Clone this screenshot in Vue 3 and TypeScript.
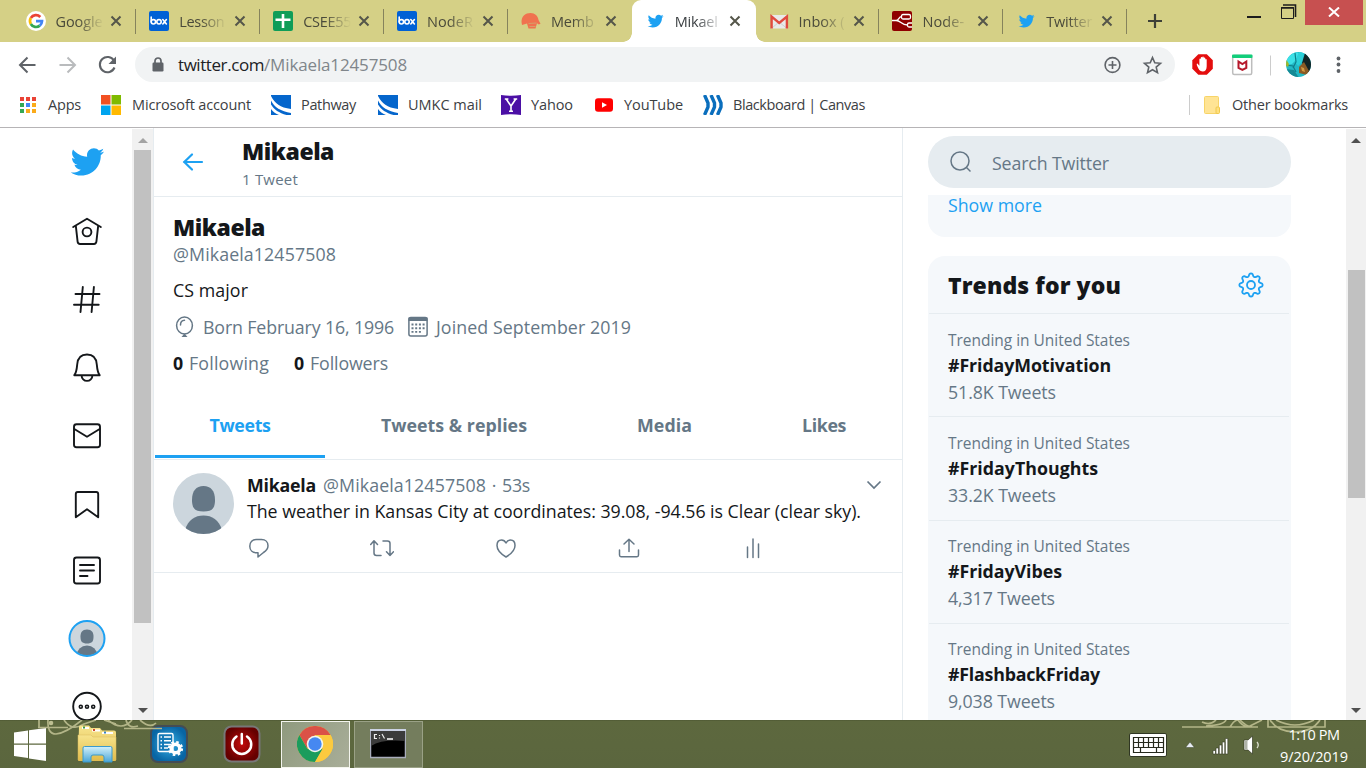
<script setup lang="ts">
interface BrowserTab { icon: string; title: string; w: number; active?: boolean; line?: boolean }
interface Bookmark { icon: string; label: string; w: number; iw: number; gap: number; after: number }
interface Trend { tag: string; tagW: number; count: string; countW: number; h: number; pad: number }

// Tightens or loosens the tracking so that a label fills the given width.
const vFit = {
  mounted(el: HTMLElement, binding: { value: number }) {
    const natural = el.getBoundingClientRect().width
    const count = (el.textContent ?? '').trim().length
    if (count > 0) el.style.letterSpacing = `${(binding.value - natural) / count}px`
  },
}

const tabs: BrowserTab[] = [
  { icon: 'google', title: 'Google', w: 47, line: true },
  { icon: 'box', title: 'Lesson', w: 45, line: true },
  { icon: 'sheets', title: 'CSEE55', w: 48, line: true },
  { icon: 'box', title: 'NodeR', w: 46, line: true },
  { icon: 'helmet', title: 'Memb', w: 43 },
  { icon: 'bird', title: 'Mikael', w: 43, active: true },
  { icon: 'gmail', title: 'Inbox (', w: 46, line: true },
  { icon: 'nodered', title: 'Node-', w: 42, line: true },
  { icon: 'bird', title: 'Twitter', w: 46, line: true },
]

const bookmarks: Bookmark[] = [
  { icon: 'apps', label: 'Apps', w: 33, iw: 18, gap: 11, after: 20 },
  { icon: 'microsoft', label: 'Microsoft account', w: 119, iw: 20, gap: 11, after: 20 },
  { icon: 'swoosh', label: 'Pathway', w: 55, iw: 20, gap: 10, after: 22 },
  { icon: 'swoosh', label: 'UMKC mail', w: 74, iw: 20, gap: 10, after: 19 },
  { icon: 'yahoo', label: 'Yahoo', w: 42, iw: 20, gap: 10, after: 21 },
  { icon: 'youtube', label: 'YouTube', w: 59, iw: 20, gap: 10, after: 20 },
  { icon: 'bb', label: 'Blackboard | Canvas', w: 132, iw: 20, gap: 10, after: 0 },
]

const trends: Trend[] = [
  { tag: '#FridayMotivation', tagW: 163, count: '51.8K Tweets', countW: 108, h: 103, pad: 13 },
  { tag: '#FridayThoughts', tagW: 150, count: '33.2K Tweets', countW: 108, h: 104, pad: 13 },
  { tag: '#FridayVibes', tagW: 114, count: '4,317 Tweets', countW: 107, h: 103, pad: 12 },
  { tag: '#FlashbackFriday', tagW: 152, count: '9,038 Tweets', countW: 107, h: 103, pad: 12 },
]

const bird = 'M23.643 4.937c-.835.37-1.732.62-2.675.733.962-.576 1.7-1.49 2.048-2.578-.9.534-1.897.922-2.958 1.13-.85-.904-2.06-1.47-3.4-1.47-2.572 0-4.658 2.086-4.658 4.66 0 .364.042.718.12 1.06-3.873-.195-7.304-2.05-9.602-4.868-.4.69-.63 1.49-.63 2.342 0 1.616.823 3.043 2.072 3.878-.764-.025-1.482-.234-2.11-.583v.06c0 2.257 1.605 4.14 3.737 4.568-.392.106-.803.162-1.227.162-.3 0-.593-.028-.877-.082.593 1.85 2.313 3.198 4.352 3.234-1.595 1.25-3.604 1.995-5.786 1.995-.376 0-.747-.022-1.112-.065 2.062 1.323 4.51 2.093 7.14 2.093 8.57 0 13.255-7.098 13.255-13.254 0-.2-.005-.402-.014-.602.91-.658 1.7-1.477 2.323-2.41z'

// Outline of the eight-toothed settings gear.
const gear = (() => {
  const pts: string[] = []
  for (let i = 0; i <= 96; i++) {
    const a = (i / 96) * Math.PI * 2
    const c = Math.cos(a * 8)
    const r = 10.1 + 1.5 * Math.sign(c) * Math.pow(Math.abs(c), 0.6)
    pts.push(`${(r * Math.sin(a)).toFixed(2)} ${(-r * Math.cos(a)).toFixed(2)}`)
  }
  return `M${pts.join('L')}Z`
})()
</script>

<template>
  <div class="screen">
    <header class="tabstrip">
      <div v-for="(t, i) in tabs" :key="i" class="tab" :class="{ active: t.active, line: t.line }">
        <svg class="fav" viewBox="0 0 20 20">
          <g v-if="t.icon === 'google'">
            <circle cx="10" cy="10" r="10" fill="#fff" />
            <g fill="none" stroke-width="2.7">
              <path d="M14.3 6A6 6 0 0 0 4.8 7" stroke="#ea4335" />
              <path d="M4.8 7a6 6 0 0 0 0 6" stroke="#fbbc05" />
              <path d="M4.8 13a6 6 0 0 0 9 1.6" stroke="#34a853" />
              <path d="M13.8 14.6A6 6 0 0 0 16 10.2H10" stroke="#4285f4" />
            </g>
          </g>
          <g v-else-if="t.icon === 'box'">
            <rect width="20" height="20" rx="2" fill="#0061d5" />
            <g fill="none" stroke="#fff" stroke-width="1.6" stroke-linecap="round">
              <path d="M2.2 6v5M13.8 8.6l3.6 4.4M17.4 8.6L13.8 13" />
              <circle cx="4.4" cy="10.8" r="2.2" /><circle cx="10" cy="10.8" r="2.2" />
            </g>
          </g>
          <g v-else-if="t.icon === 'sheets'">
            <rect width="20" height="20" rx="2" fill="#0f9d58" />
            <path d="M10 3v14M2.5 8.7h15" stroke="#fff" stroke-width="2.6" />
          </g>
          <g v-else-if="t.icon === 'helmet'">
            <path d="M.5 11C.5 5 4.500 2 9.500 2 14 2 17 5 17.500 9l2 3.700-1.800.8-1.700-1.300-1.500 5.300H7.500L6 12.500 1 14z" fill="#f0724f" />
            <path d="M7.500 12.500l8-.5M8.500 15.500h6" stroke="#d6a06a" stroke-width="1" />
          </g>
          <g v-else-if="t.icon === 'bird'" transform="translate(2 1.700) scale(.7)"><path :d="bird" fill="#1da1f2" /></g>
          <g v-else-if="t.icon === 'gmail'" transform="translate(1 0)">
            <rect x="1" y="4" width="16.500" height="13.500" fill="#e9e9e9" />
            <path d="M2 17l7-6 7.500 6" fill="none" stroke="#cfcfcf" />
            <path d="M1.600 17.500V5.500L9.200 12l7.700-6.500v12" fill="none" stroke="#e04a3f" stroke-width="2.400" />
          </g>
          <g v-else>
            <rect width="20" height="20" rx="2" fill="#8f0000" />
            <g fill="none" stroke="#fff" stroke-width="1.300">
              <rect x="9.500" y="3.500" width="9" height="4.500" rx="1.500" /><path d="M20 12h-3q-1.500 0-1.500 1.500v1q0 1.500 1.500 1.500h3" />
              <path d="M0 9.500h4c3 0 2.500-3.800 5.500-3.800M4 9.500c5 0 5 4.500 11.500 4.500" />
            </g>
          </g>
        </svg>
        <span class="tabtext"><span v-fit="t.w" class="t">{{ t.title }}</span></span>
        <svg class="x" viewBox="0 0 12 12"><path d="M1.500 1.500l9 9M10.500 1.500l-9 9" /></svg>
      </div>
      <svg class="plus" viewBox="0 0 16 16"><path d="M8 1v14M1 8h14" /></svg>
      <div class="winbtns">
        <svg class="mini" viewBox="0 0 60 25">
          <path d="M2 17h14" stroke="#1c1c1c" stroke-width="2" />
          <path d="M36.500 7.500h12v11h-12z" fill="none" stroke="#1c1c1c" />
          <path d="M36 8h13M38 5h12.500v12" fill="none" stroke="#1c1c1c" stroke-width="1.600" />
        </svg>
        <div class="closebtn"><svg viewBox="0 0 12 10"><path d="M1 .5l10 9M11 .5l-10 9" stroke="#fff" stroke-width="2" /></svg></div>
      </div>
    </header>

    <div class="toolbar">
      <svg class="navbtns" viewBox="0 0 120 36">
        <path d="M35.500 18H20.500M27.500 10.500L20 18l7.500 7.500" fill="none" stroke="#5f6368" stroke-width="2" />
        <path d="M59.500 18h15M67.500 10.500L75 18l-7.500 7.500" fill="none" stroke="#b9bbbd" stroke-width="2" />
        <path d="M114 13.700A7.600 7.600 0 1 0 114.500 20.500" fill="none" stroke="#5f6368" stroke-width="2.100" />
        <path d="M116 9.500v7.500h-7.500z" fill="#5f6368" />
      </svg>
      <div class="omnibox">
        <svg class="lock" viewBox="0 0 12 15"><rect x=".5" y="5.500" width="11" height="9" rx="1.200" fill="#5f6368" /><path d="M3 6V4a3 3 0 0 1 6 0v2" fill="none" stroke="#5f6368" stroke-width="1.700" /></svg>
        <span v-fit="86" class="t url">twitter.com</span><span v-fit="143" class="t url path">/Mikaela12457508</span>
        <svg class="omni-icons" viewBox="0 0 62 20">
          <circle cx="9.500" cy="10" r="7.400" fill="none" stroke="#5f6368" stroke-width="1.600" />
          <path d="M9.500 6v8M5.500 10h8" stroke="#5f6368" stroke-width="1.600" />
          <path d="M49.500 2.600l2.300 5.200 5.700.5-4.300 3.800 1.300 5.600-5-3-5 3 1.300-5.600-4.300-3.800 5.700-.5z" fill="none" stroke="#5f6368" stroke-width="1.600" />
        </svg>
      </div>
      <svg class="ext" viewBox="0 0 170 30">
        <path d="M9.300 5h8.500l6 6v8.500l-6 6H9.300l-6-6V11z" transform="translate(0 -.7)" fill="#e40d0d" />
        <path d="M8.600 14.500l1.800 2V10c0-1 1.400-1 1.400 0V8.500c0-1 1.500-1 1.500 0V8c0-1 1.500-1 1.500 0v1c0-1 1.500-1 1.500 0v1.500c0-1 1.400-1 1.400 0V17c0 3.500-1.500 5.200-4 5.200-3 0-4-2-5.800-6.200-.4-1.500.2-2 .7-1.500z" transform="translate(0 -.7)" fill="#fff" />
        <rect x="43.700" y="5.500" width="19" height="19" rx="1.500" fill="#fff" stroke="#bdbdbd" stroke-width="1.500" />
        <rect x="43" y="4.500" width="20.500" height="3.500" rx="1" fill="#12ce7a" />
        <path d="M49.500 11.500v6.500l3.900 2 3.900-2v-6.500l-3.900 2.500z" fill="none" stroke="#b6172a" stroke-width="2" />
        <path d="M81.500 5.500v20" stroke="#ccc" />
        <clipPath id="pf"><circle cx="109.500" cy="14.500" r="12.500" /></clipPath>
        <g clip-path="url(#pf)">
          <rect x="96" y="1" width="27" height="28" fill="#22b9c6" />
          <path d="M98 7l8-5 4 1-3 7-4 4-6 1z" fill="#3ce0e6" />
          <path d="M110 2h5l-1 9-5 5-3-4z" fill="#2bd0d8" />
          <path d="M106 3l1 9-3 6M97 15l7 1 3 6" fill="none" stroke="#0e7f8b" stroke-width="1.200" />
          <path d="M116 3l7 7v18l-6-8-4-7z" fill="#122526" /><path d="M96 19l9 1 5 8H97z" fill="#158a95" />
          <path d="M110 17l5-5 5 9-2 4-8-2z" fill="#8a5b25" /><path d="M112 17l3 1 1 4-3-1z" fill="#d09a44" /><path d="M97 9l3 5-1 3-3-2z" fill="#9bb62f" />
        </g>
        <g fill="#5f6368"><circle cx="149.500" cy="8.500" r="1.900" /><circle cx="149.500" cy="14.500" r="1.900" /><circle cx="149.500" cy="21" r="1.900" /></g>
      </svg>
    </div>

    <div class="bookmarks">
      <div v-for="(b, i) in bookmarks" :key="i" class="bm" :style="{ gap: b.gap + 'px', marginRight: b.after + 'px' }">
        <svg :width="b.iw" height="20" :viewBox="`0 0 ${b.iw} 20`">
          <g v-if="b.icon === 'apps'">
            <path d="M1 2h4v4H1zM7 2h4v4H7zM13 2h4v4h-4z" fill="#ea4335" />
            <path d="M1 8h4v4H1zM1 14h4v4H1z" fill="#34a853" /><path d="M7 8h4v4H7z" fill="#4285f4" />
            <path d="M13 8h4v4h-4zM13 14h4v4h-4zM7 14h4v4H7z" fill="#fbab1a" />
          </g>
          <g v-else-if="b.icon === 'microsoft'">
            <path d="M0 0h9.500v9.500H0z" fill="#f25022" /><path d="M10.500 0H20v9.500h-9.500z" fill="#7fba00" />
            <path d="M0 10.500h9.500V20H0z" fill="#00a4ef" /><path d="M10.500 10.500H20V20h-9.500z" fill="#ffb900" />
          </g>
          <g v-else-if="b.icon === 'swoosh'">
            <rect width="20" height="20" fill="#0566cc" />
            <path d="M0 1c4 7.500 9 11.500 20 13v4C10 16.500 3 12 0 5.500z" fill="#fff" />
            <path d="M0 9.500c3 5 8 8.500 15.500 10.500H8C5 19 2 17 0 14z" fill="#fff" />
          </g>
          <g v-else-if="b.icon === 'yahoo'">
            <path d="M0 0q10 1.400 20 0v20q-10-1.400-20 0z" fill="#4b0fa5" />
            <path d="M5.200 4l4.800 7 4.800-7M10 11v5.500M3.800 4h3.600M12.600 4h3.600M8 16.300h4" fill="none" stroke="#fff" stroke-width="1.600" />
          </g>
          <g v-else-if="b.icon === 'youtube'"><rect x="1" y="3.200" width="18" height="13.500" rx="3" fill="#f00" /><path d="M8 7.200v5.600l5-2.800z" fill="#fff" /></g>
          <g v-else fill="none" stroke="#0a6ebd" stroke-width="3.400" stroke-linejoin="round"><path d="M1.500 0L5 8v4L1.500 20M8 0l3.500 8v4L8 20M14.500 0L18 8v4l-3.500 8" /></g>
        </svg>
        <span v-fit="b.w" class="t">{{ b.label }}</span>
      </div>
      <div class="other">
        <svg width="16" height="20" viewBox="0 0 16 20"><rect x=".5" y="1.500" width="14" height="17" rx="1" fill="#ffe494" stroke="#f7d468" /><rect x="12" y="12" width="3.500" height="6.500" rx="1" fill="#ffe07e" stroke="#f0c84d" /></svg>
        <span v-fit="116" class="t">Other bookmarks</span>
      </div>
    </div>

    <div class="page">
      <nav class="side">
        <svg viewBox="-18 -18 36 36"><g transform="translate(-17.700 -17.700) scale(1.475)"><path :d="bird" fill="#1da1f2" /></g></svg>
        <svg viewBox="-18 -18 36 36"><g class="ln"><path d="M-13.800-3L0-11.200 13.800-3M-11.200-4.300l1.800 16q.3 2.300 2.400 2.300h14q2.100 0 2.400-2.300l1.800-16" /><circle cy="2" r="4.400" /></g></svg>
        <svg viewBox="-18 -18 36 36"><path class="ln" d="M-4.200-11L-6.500 14M6.900-11L4.600 14M-11.500-4H12.500M-13 6.800H11.700" /></svg>
        <svg viewBox="-18 -18 36 36"><path class="ln" d="M-12.700 9.200C-10.500 6.500-10.200 3-9.800-1.500-9.300-8-5.500-11.500 0-11.500S9.300-8 9.800-1.500C10.200 3 10.500 6.500 12.700 9.200ZM-5.400 9.500A5.400 5.400 0 0 0 5.400 9.500" /></svg>
        <svg viewBox="-18 -18 36 36"><g class="ln"><rect x="-13" y="-9.700" width="26" height="23" rx="2.500" /><path d="M-12.700-5L0 2.800 12.700-5" /></g></svg>
        <svg viewBox="-18 -18 36 36"><path class="ln" d="M-11.200 15.200V-8q0-2 2-2H9.200q2 0 2 2V15.200L0 7.300Z" /></svg>
        <svg viewBox="-18 -18 36 36"><g class="ln"><rect x="-13" y="-12.500" width="26" height="26" rx="2.500" /><path d="M-7-5H7M-7 .5H7M-7 6H.5" /></g></svg>
        <svg class="me" viewBox="-19 -19.500 38 38">
          <clipPath id="c1"><circle r="17" /></clipPath>
          <circle r="17.500" fill="#ccd6dd" />
          <g fill="#657786" clip-path="url(#c1)"><path d="M0-9C4.800-9 6.500-6 6.500-2 6.500 3 5 5 0 5S-6.500 3-6.500-2C-6.500-6-4.800-9 0-9Z" /><circle cy="17.500" r="10.500" /></g>
          <circle r="17.500" fill="none" stroke="#1da1f2" stroke-width="2" />
        </svg>
        <svg viewBox="-18 -18 36 36"><g class="ln"><circle cy=".5" r="13.800" /><g stroke-width="1.600"><circle cx="-6.200" cy=".7" r="1.500" /><circle cy=".7" r="1.500" /><circle cx="6.200" cy=".7" r="1.500" /></g></g></svg>
      </nav>

      <div class="scroll inner"><i class="up dim"></i><b></b><i class="down"></i></div>

      <main class="col">
        <div class="head">
          <svg class="backarrow" viewBox="0 0 22 20"><path d="M20 10H2M10 2.500L2.300 10l7.700 7.500" /></svg>
          <div class="headtext">
            <h2><span v-fit="92" class="t">Mikaela</span></h2>
            <p><span v-fit="56" class="t">1 Tweet</span></p>
          </div>
        </div>
        <section class="profile">
          <h1><span v-fit="92" class="t">Mikaela</span></h1>
          <p class="grey handle"><span v-fit="163" class="t">@Mikaela12457508</span></p>
          <p class="bio"><span v-fit="75" class="t">CS major</span></p>
          <div class="facts grey">
            <svg width="24" height="24" viewBox="0 0 24 24"><g fill="none" stroke="#657786" stroke-width="1.500"><ellipse cx="11.500" cy="10.500" rx="7.900" ry="8.600" /><path d="M7.500 10c0-2.500 1.500-4.500 4-4.700" stroke-linecap="round" /></g><path d="M11.500 18.500l3 3.500h-6z" fill="#657786" /></svg>
            <span v-fit="191" class="t">Born February 16, 1996</span>
            <svg class="cal" width="20" height="22" viewBox="0 0 20 22"><rect x=".9" y="1.500" width="18.200" height="18.500" rx="2" fill="none" stroke="#657786" stroke-width="1.500" /><path d="M.5 1.500h19V5H.5z" fill="#657786" /><path d="M3.500 8.500h2M7.200 8.500h2M10.900 8.500h2M14.600 8.500h2M3.500 12.200h2M7.200 12.200h2M10.900 12.200h2M14.600 12.200h2M3.500 15.900h2M7.200 15.900h2M10.900 15.900h2" stroke="#657786" stroke-width="1.900" /></svg>
            <span v-fit="195" class="t">Joined September 2019</span>
          </div>
          <div class="follow grey">
            <strong v-fit="10" class="t">0</strong><span v-fit="80" class="t fl">Following</span>
            <strong v-fit="10" class="t two">0</strong><span v-fit="78" class="t fl">Followers</span>
          </div>
        </section>
        <div class="tabs">
          <div class="ptab one"><span v-fit="61" class="t">Tweets</span></div>
          <div class="ptab two"><span v-fit="146" class="t">Tweets &amp; replies</span></div>
          <div class="ptab three"><span v-fit="55" class="t">Media</span></div>
          <div class="ptab four"><span v-fit="44" class="t">Likes</span></div>
        </div>
        <article class="tweet">
          <svg class="ava" viewBox="0 0 61 61">
            <clipPath id="c2"><circle cx="30.500" cy="30.500" r="30.500" /></clipPath>
            <g clip-path="url(#c2)"><rect width="61" height="61" fill="#ccd6dd" />
              <g fill="#657786"><path d="M30.500 13C38 13 42 18 42 27S38.500 38.500 30.500 38.500 19 36 19 27 23 13 30.500 13Z" /><path d="M12 57C15 47 22 42.500 30.500 42.500S46 47 49 57V61H12Z" /></g></g>
          </svg>
          <div class="tbody">
            <div class="byline"><strong v-fit="69" class="t">Mikaela</strong><span v-fit="163" class="t grey hd">@Mikaela12457508</span><span class="t grey dot">·</span><span v-fit="28" class="t grey">53s</span>
              <svg class="chev" viewBox="0 0 16 10"><path d="M1.500 1.500L8 8l6.500-6.500" fill="none" stroke="#657786" stroke-width="1.700" /></svg>
            </div>
            <p class="msg"><span v-fit="614" class="t">The weather in Kansas City at coordinates: 39.08, -94.56 is Clear (clear sky).</span></p>
            <div class="actions">
              <svg viewBox="-12 -12 24 24"><path d="M-2.500-8.500H2.500C6.500-8.500 9-5.800 9-2.300 9 .8 7.300 2.700 4.500 4.500L-1 9V4.800H-2.500C-6.500 4.800-9.200 2-9.200-1.700-9.200-5.800-6.500-8.500-2.500-8.500Z" /></svg>
              <svg viewBox="-12 -12 24 24"><path d="M-1 7.500H-5.500Q-8 7.500-8 5V-7M-11.300-3.500L-8-7.200-4.500-3.500M1-7H5.500Q8 -7 8-4.500V7.500M4.500 3.800L8 7.500 11.500 3.800" /></svg>
              <svg viewBox="-12 -12 24 24"><path d="M0 9C-5 6-9 1.500-9-2.500-9-6-7-8-4.500-8-2.500-8-1-7 0-5 1-7 2.500-8 4.500-8 7-8 9-6 9-2.500 9 1.500 5 6 0 9Z" /></svg>
              <svg viewBox="-12 -12 24 24"><path d="M-9.500 2V7Q-9.500 8.700-8 8.700H8Q9.500 8.700 9.500 7V2M0 3.500V-8.500M-5-4L0-8.800 5-4" /></svg>
              <svg viewBox="-12 -12 24 24"><path d="M-5.500 9.500V-1M0 9.500V-9M5.500 9.500V-4" /></svg>
            </div>
          </div>
        </article>
      </main>

      <aside class="right">
        <div class="search">
          <svg viewBox="0 0 24 24"><circle cx="11" cy="11" r="9" /><path d="M17.500 17.500l4 4" /></svg>
          <span v-fit="117" class="t">Search Twitter</span>
        </div>
        <div class="card more"><span v-fit="94" class="t">Show more</span></div>
        <div class="card trends">
          <div class="thead"><h2><span v-fit="173" class="t">Trends for you</span></h2>
            <svg viewBox="-13 -13 26 26"><path :d="gear" /><circle r="4" /></svg>
          </div>
          <div v-for="tr in trends" :key="tr.tag" class="trend" :style="{ height: tr.h + 'px', paddingTop: tr.pad + 'px' }">
            <p class="small"><span v-fit="182" class="t">Trending in United States</span></p>
            <p class="tag"><span v-fit="tr.tagW" class="t">{{ tr.tag }}</span></p>
            <p class="grey count"><span v-fit="tr.countW" class="t">{{ tr.count }}</span></p>
          </div>
        </div>
      </aside>
      <div class="scroll outer"><i class="up"></i><b></b><i class="down"></i></div>
    </div>

    <footer class="taskbar">
      <svg class="flourish lf" viewBox="0 0 126 16" fill="none" stroke="#b3b588" stroke-width="1.700">
        <path d="M0 7.500H30M86 8.500H124M1 0V7M10 0Q9 14 18 14Q28 13 44 0M26 0Q34 12 46 4L58 0M66 0L78 4M70 0Q84 12 94 0M88 0Q90 9 100 6M102 0Q112 9 118 3" /><circle cx="13" cy="3" r="2.300" fill="#bdbe91" stroke="none" />
      </svg>
      <svg class="flourish rf" viewBox="0 0 146 14" fill="none" stroke="#b3b588" stroke-width="1.700">
        <path d="M0 7H76M20 2Q28 6 34 0M24 6Q42 5 44 0M48 7Q52 0 56 0Q60 6 66 7M58 0Q66 8 70 6M68 6L80 0M86 0V7H143V0M88 0Q96 12 113 12T138 0M94 0Q113 10 132 0" />
      </svg>
      <svg class="start" viewBox="0 0 32 33"><path d="M0 4.500L14 2.500V15.500H0zM15 2.300L32 0V15.500H15zM0 16.700H14V30L0 28zM15 16.700H32V33L15 30.500z" fill="#fff" /></svg>
      <svg class="explorer" viewBox="0 0 40 40">
        <defs><linearGradient id="fy" x2="0" y2="1"><stop stop-color="#f7e48d" /><stop offset="1" stop-color="#e2bd4c" /></linearGradient><linearGradient id="fb" x2="0" y2="1"><stop stop-color="#d3f1fa" /><stop offset="1" stop-color="#4ba6d8" /></linearGradient></defs>
        <path d="M2 3q0-1.500 1.500-1.500H12l2 2.500h9l2 2.500h12q2 0 2 2V36q0 1-1 1H2q-1 0-1-1z" fill="url(#fy)" />
        <path d="M5 3h7v2H5zM15 5.500h8v2h-8zM25 8h11v2H25z" fill="#fff" /><path d="M6 2.500h2v2H6z" fill="#419747" /><path d="M16 5h2v2h-2z" fill="#d34b2d" /><path d="M27 7.500h2v2h-2z" fill="#3982c1" />
        <path d="M1 11h13l2 2h23v23H1z" fill="url(#fy)" stroke="#d8b85c" stroke-width=".5" />
        <path d="M6 24q0-1.500 1.500-1.500h26Q35 22.500 35 24v14h-8v-5q0-2-2-2H16q-2 0-2 2v5H6z" fill="url(#fb)" stroke="#3b9acc" />
      </svg>
      <svg class="blue" viewBox="0 0 38 38">
        <defs><radialGradient id="bl"><stop stop-color="#37b2e8" /><stop offset="1" stop-color="#0865a4" /></radialGradient></defs>
        <rect x="1" y="1" width="36" height="36" rx="7" fill="url(#bl)" stroke="#444c55" stroke-width="2" />
        <rect x="8" y="8.500" width="15" height="18" rx="1.500" fill="#1479b7" stroke="#fff" stroke-width="1.400" />
        <path d="M10.500 12h1.500M14 12h7M10.500 15.700h1.500M14 15.700h7M10.500 19.400h1.500M14 19.400h7M10.500 23h1.500M14 23h4" stroke="#fff" stroke-width="1.500" />
        <circle cx="25.500" cy="23.500" r="4.300" fill="none" stroke="#fff" stroke-width="3.600" /><circle cx="25.500" cy="23.500" r="6.400" fill="none" stroke="#fff" stroke-width="2.400" stroke-dasharray="2.510" />
      </svg>
      <svg class="power" viewBox="0 0 38 38">
        <defs><radialGradient id="rd"><stop stop-color="#c30b0b" /><stop offset="1" stop-color="#650000" /></radialGradient></defs>
        <rect x="1.500" y="1.500" width="35" height="35" rx="7" fill="url(#rd)" stroke="#777" stroke-width="2" />
        <path d="M13.500 11.500A9.500 9.500 0 1 0 24 11.500M18.800 9v9.500" fill="none" stroke="#fff" stroke-width="2.500" stroke-linecap="round" />
      </svg>
      <div class="task on">
        <svg width="36" height="36" viewBox="-18 -18 36 36">
          <circle r="18" fill="#fcca3f" />
          <path d="M-15.600-9A18 18 0 0 1 15.600-9H0L-7.800 4.500Z" fill="#da5147" />
          <path d="M-15.600-9A18 18 0 0 0 0 18L7.800 4.500 0 8-7.800 4.500Z" fill="#1b9c5d" />
          <path d="M15.600-9A18 18 0 0 1 0 18L8 4.500 7-9Z" fill="#fcca3f" />
          <circle r="8.300" fill="#f3f6ee" /><circle r="6.700" fill="#4688f1" />
        </svg>
      </div>
      <div class="task">
        <svg width="36" height="30" viewBox="0 0 36 30"><rect x=".5" y=".5" width="35" height="28" fill="#000" stroke="#a9adbc" stroke-width="1.500" /><path d="M1 1h34v11Q12 10 1 17z" fill="#3b3b3b" /><path d="M0 0h36v2H0z" fill="#cbd2e4" /><path d="M7 5.500H4.500v4H7M9.500 6v1M9.500 8.500v1M12 5l2.500 4.500" fill="none" stroke="#eee" stroke-width="1.200" /><path d="M17 10h6" stroke="#fff" stroke-width="1.500" /></svg>
      </div>
      <div class="tray">
        <svg class="kb" viewBox="0 0 38 24"><rect x=".5" y=".5" width="37" height="23" rx="1.500" fill="#fff" stroke="#2f3622" /><path d="M4.500 4.500h30v15h-30zM4.500 9.500h30M4.500 14.500h30M9.500 4.500v10M14.500 4.500v10M19.500 4.500v10M24.500 4.500v10M29.500 4.500v10M11.500 14.500v5M27.500 14.500v5" fill="none" stroke="#26291d" stroke-width="1.200" /></svg>
        <svg class="tri" viewBox="0 0 10 8"><path d="M5 1l4.500 5.500H.5z" fill="#e8ecf4" stroke="#3a4229" stroke-width=".5" /></svg>
        <svg class="sig" viewBox="0 0 17 18"><path d="M1 13.500h2.500V17H1zM4 11h2.500v6H4zM7.300 8h2.500v9H7.300zM10.300 5h2.500v12h-2.500zM13.300 1.500h2.500V17h-2.500z" fill="#fff" stroke="#333924" stroke-width=".6" /></svg>
        <svg class="spk" viewBox="0 0 20 20"><path d="M1 5h4l4.500-4v18L5 15H1z" fill="#fff" stroke="#333924" stroke-width=".7" /><path d="M4.500 5.800v8.400H1.500V5.800z" fill="#afb3a8" /><path d="M14 7q2.500 3 0 6" fill="none" stroke="#dcdfcf" stroke-width="1.300" /></svg>
        <div class="clock"><span v-fit="51" class="t">1:10 PM</span><span v-fit="68" class="t">9/20/2019</span></div>
      </div>
    </footer>
  </div>
</template>

<style>
html, body { margin: 0; overflow: hidden; background: #fff; }
</style>

<style scoped>
* { box-sizing: border-box; }
h1, h2, p { margin: 0; font-weight: inherit; }
svg { display: block; flex: none; }
.screen { width: 1366px; height: 768px; overflow: hidden; display: flex; flex-direction: column; font-family: "Open Sans", "Noto Sans", sans-serif; color: #14171a; background: #fff; }
.t { display: inline-block; white-space: pre; }
.grey { color: #657786; }

.tabstrip { height: 42px; flex: none; background: #d5d086; display: flex; align-items: center; padding-left: 12.500px; position: relative; }
.tab { position: relative; width: 123.850px; height: 42px; padding-left: 13px; display: flex; align-items: center; font-size: 14.500px; color: #4a4a3a; flex: none; }
.tab.line { background: linear-gradient(#86835c, #86835c) right center / 1px 25px no-repeat; }
.fav { width: 20px; height: 20px; }
.tabtext { width: 48px; margin-left: 10px; overflow: hidden; white-space: nowrap; mask-image: linear-gradient(to right, #000 45%, transparent 100%); }
.x { width: 12px; height: 12px; margin-left: 6.500px; }
.x path { stroke: #55564a; stroke-width: 2; }
.tab.active { background: #fff; border-radius: 9px 9px 0 0; color: #3c4043; }
.tab.active::before, .tab.active::after { content: ""; position: absolute; bottom: 0; width: 9px; height: 9px; }
.tab.active::before { left: -9px; background: radial-gradient(circle at 0 0, transparent 8.500px, #fff 9px); }
.tab.active::after { right: -9px; background: radial-gradient(circle at 100% 0, transparent 8.500px, #fff 9px); }
.plus { width: 16px; height: 16px; margin-left: 19.500px; }
.plus path { stroke: #3e4037; stroke-width: 2.200; }
.winbtns { margin-left: auto; margin-right: 3px; align-self: flex-start; display: flex; }
.mini { width: 60px; height: 25px; }
.closebtn { width: 58px; height: 25px; background: #c75050; display: flex; align-items: center; justify-content: center; }
.closebtn svg { width: 12px; height: 10px; margin-top: -2px; }

.toolbar { height: 45px; flex: none; display: flex; align-items: center; }
.navbtns { width: 120px; height: 36px; }
.omnibox { margin-left: 15px; width: 1040px; height: 35px; border-radius: 18px; background: #f1f3f4; display: flex; align-items: center; padding-left: 17px; }
.lock { width: 12px; height: 15px; margin-right: 14px; }
.url { font-size: 17px; color: #202124; line-height: 34px; }
.url.path { color: #80868b; }
.omni-icons { width: 62px; height: 20px; margin-left: auto; margin-right: 10px; }
.ext { width: 170px; height: 30px; margin-left: 14px; }

.bookmarks { height: 41px; flex: none; padding: 0 18px 5px 19px; border-bottom: 1px solid #b6b4b6; display: flex; align-items: center; font-size: 14.500px; color: #3c4043; }
.bm { display: flex; align-items: center; }
.other { margin-left: auto; display: flex; align-items: center; gap: 12px; padding-left: 14px; border-left: 1px solid #ccc; height: 20px; }

.page { height: 592px; flex: none; display: flex; overflow: hidden; font-size: 17.800px; }
.side { width: 132px; height: 592px; overflow: hidden; display: flex; flex-direction: column; gap: 32px; padding: 16px 0 0 69px; }
.side svg { width: 36px; height: 36px; }
.side .me { width: 38px; height: 38px; margin: -1px; }
.ln { fill: none; stroke: #14171a; stroke-width: 1.900; stroke-linecap: round; stroke-linejoin: round; }

.scroll { background: #f1f1f1; margin-top: 1px; height: 591px; display: flex; flex-direction: column; align-items: center; flex: none; }
.scroll b { width: 17px; background: #c1c1c1; }
.scroll i { width: 0; height: 0; border-left: 5px solid transparent; border-right: 5px solid transparent; }
.scroll .up { border-bottom: 5px solid #505050; margin-top: 9px; }
.scroll .up.dim { border-bottom-color: #a3a3a3; }
.scroll .down { border-top: 5px solid #505050; margin-top: auto; margin-bottom: 7px; }
.inner { width: 21px; }
.inner b { height: 473px; margin-top: 7px; }
.outer { width: 20px; margin-left: auto; }
.outer b { height: 228px; margin-top: 127px; margin-left: 1px; }

.col { width: 750px; height: 592px; border-left: 1px solid #e6ecf0; border-right: 1px solid #e6ecf0; flex: none; }
.head { height: 69px; border-bottom: 1px solid #e6ecf0; display: flex; padding-left: 28px; }
.backarrow { width: 22px; height: 20px; margin-top: 24px; }
.backarrow path { fill: none; stroke: #1da1f2; stroke-width: 2.200; stroke-linecap: round; }
.headtext { margin-left: 38px; padding-top: 8px; }
h1, h2 { font-weight: 800; font-size: 23px; line-height: 30px; }
.headtext p { font-size: 15px; line-height: 20px; color: #657786; margin-top: 3px; }
.profile { padding: 15px 0 0 19px; height: 195px; }
.handle { line-height: 24px; }
.bio { line-height: 24px; margin-top: 12px; }
.facts { display: flex; align-items: center; height: 26px; margin-top: 12px; }
.facts svg:first-child { margin-right: 6px; }
.facts .cal { margin: 0 8px 0 14px; }
.follow { display: flex; height: 24px; line-height: 24px; margin-top: 11px; }
.follow strong { color: #14171a; }
.fl { margin-left: 6px; }
.follow .two { margin-left: 25px; }
.tabs { height: 68px; border-bottom: 1px solid #e6ecf0; display: grid; grid-template-columns: 170px 258px 163px 156px; padding-left: 1px; font-weight: 700; color: #657786; }
.ptab { display: flex; align-items: center; justify-content: center; height: 67px; padding-bottom: 1px; }
.ptab.one { color: #1da1f2; border-bottom: 3px solid #1da1f2; height: 66px; padding: 2px 0 0; }
.tweet { height: 113px; border-bottom: 1px solid #e6ecf0; padding: 13px 19px 0; display: flex; }
.ava { width: 61px; height: 61px; }
.tbody { margin-left: 13px; flex: 1; }
.byline { display: flex; align-items: center; height: 25px; padding-bottom: 2px; }
.hd { margin-left: 7px; }
.dot { width: 16px; text-align: center; }
.chev { width: 16px; height: 10px; margin-left: auto; margin-right: 1.500px; }
.msg { line-height: 26px; white-space: nowrap; }
.actions { display: flex; gap: 99.500px; margin-top: 11.500px; margin-left: -.5px; }
.actions svg { width: 24px; height: 24px; }
.actions path { fill: none; stroke: #657786; stroke-width: 1.500; stroke-linecap: round; stroke-linejoin: round; }

.right { width: 363px; margin-left: 25px; padding-top: 8px; flex: none; }
.search { height: 52px; border-radius: 26px; background: #e6ecf0; display: flex; align-items: center; padding-left: 21px; color: #657786; line-height: 54px; }
.search .t { position: relative; top: 1px; }
.search svg { width: 24px; height: 24px; margin-right: 19px; }
.search svg * { fill: none; stroke: #657786; stroke-width: 1.500; }
.card { background: #f5f8fb; }
.more { margin-top: 7px; height: 42px; border-radius: 0 0 17px 17px; padding: 0 20px; line-height: 20px; color: #1da1f2; }
.trends { margin-top: 19px; border-radius: 17px 17px 0 0; height: 470px; padding: 0 2px 0 1px; }
.thead { height: 58px; display: flex; align-items: center; justify-content: space-between; border-bottom: 1px solid #e6ecf0; padding: 0 25px 0 19px; }
.thead svg { width: 26px; height: 26px; }
.thead svg * { fill: none; stroke: #1da1f2; stroke-width: 1.800; stroke-linejoin: round; }
.trend { padding: 13px 19px 0; border-bottom: 1px solid #e6ecf0; }
.small { font-size: 15.500px; line-height: 26px; color: #657786; }
.tag { font-weight: 700; line-height: 26px; margin-top: -1px; }
.count { line-height: 26px; margin-top: 1px; }

.taskbar { height: 48px; flex: none; position: relative; background: linear-gradient(#49532f 0, #5d683e 1px, #5b663e 100%); display: flex; align-items: center; padding-left: 14px; }
.flourish { position: absolute; top: 0; }
.lf { left: 38px; width: 126px; height: 16px; }
.rf { right: 38px; width: 146px; height: 14px; }
.start { width: 32px; height: 33px; }
.explorer { width: 40px; height: 40px; margin-left: 31px; position: relative; }
.blue { width: 38px; height: 38px; margin-left: 33px; }
.power { width: 38px; height: 38px; margin-left: 35px; margin-top: -1px; }
.task { width: 69px; height: 47px; margin-left: 4px; margin-top: 1px; background: #747d5d; border: 1px solid #9aa186; display: flex; align-items: center; justify-content: center; }
.task svg { margin: -1px 2px 0 0; }
.task.on { margin-left: 20px; background: linear-gradient(120deg, #8f9a7e, #a9ae99); border-color: #f4f5ee; }
.tray { margin-left: auto; display: flex; align-items: center; height: 48px; padding-right: 18px; position: relative; }
.kb { width: 38px; height: 24px; margin-top: 1px; }
.tri { width: 10px; height: 8px; margin-left: 18px; margin-top: 1px; }
.sig { width: 17px; height: 18px; margin-left: 17px; margin-top: 3px; }
.spk { width: 20px; height: 20px; margin-left: 14px; margin-top: 2px; }
.clock { width: 68px; margin-left: 17px; display: flex; flex-direction: column; align-items: center; font-size: 14.500px; line-height: 22px; color: #fff; padding-top: 3px; }
</style>
